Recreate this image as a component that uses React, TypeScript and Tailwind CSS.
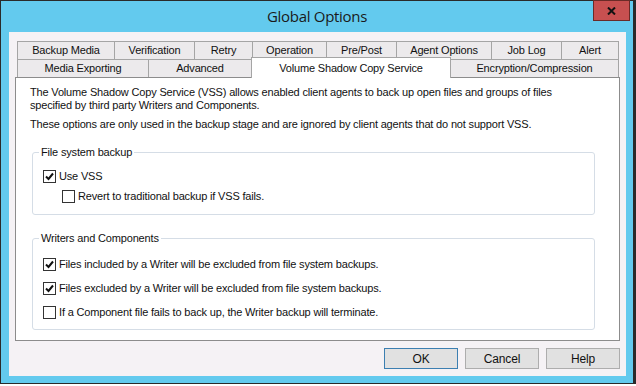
import React from "react";

type Tab = { label: string; w: string; selected?: boolean; last?: boolean };

const row1: Tab[] = [
  { label: "Backup Media", w: "w-[97px]" },
  { label: "Verification", w: "w-[80px]" },
  { label: "Retry", w: "w-[58px]" },
  { label: "Operation", w: "w-[74px]" },
  { label: "Pre/Post", w: "w-[70px]" },
  { label: "Agent Options", w: "w-[95px]" },
  { label: "Job Log", w: "w-[70px]" },
  { label: "Alert", w: "w-[58px]", last: true },
];

const row2: Tab[] = [
  { label: "Media Exporting", w: "w-[131px]" },
  { label: "Advanced", w: "w-[103px]" },
  { label: "Volume Shadow Copy Service", w: "w-[200px]", selected: true },
  { label: "Encryption/Compression", w: "w-[168px]", last: true },
];

function CheckBox({ checked }: { checked?: boolean }) {
  return (
    <span className="flex h-[13px] w-[13px] shrink-0 items-center justify-center border border-[#333333] bg-white">
      {checked && (
        <svg width="9" height="9" viewBox="0 0 9 9">
          <path d="M1 4.5 L3.5 7 L8 1.5" fill="none" stroke="#111" strokeWidth="2" />
        </svg>
      )}
    </span>
  );
}

function Option({ label, checked, indent }: { label: string; checked?: boolean; indent?: boolean }) {
  return (
    <div className={`flex h-[13px] items-center gap-[3px] ${indent ? "ml-[19px]" : ""}`}>
      <CheckBox checked={checked} />
      <span>{label}</span>
    </div>
  );
}

function GroupBox({ title, h, children }: { title: string; h: string; children: React.ReactNode }) {
  return (
    <div className={`relative ml-[16px] w-[563px] ${h} rounded-[3px] border border-[#d5dde6]`}>
      <span className="absolute -top-[8px] left-[6px] bg-white px-[2px] leading-[14px]">{title}</span>
      {children}
    </div>
  );
}

function Button({ label, primary }: { label: string; primary?: boolean }) {
  return (
    <button
      className={`h-[21px] w-[74px] border bg-[#e1e1e1] text-[12px] leading-none text-[#111] ${
        primary ? "border-[#3c7fb1]" : "border-[#adadad]"
      }`}
    >
      {label}
    </button>
  );
}

export default function App() {
  return (
    <div className="h-[386px] w-[636px] bg-white font-['Liberation_Sans',Arial,sans-serif] text-[11px] tracking-[-0.17px] text-[#111]">
      <div className="flex h-[384px] w-[636px] flex-col border-y border-l border-r-[3px] border-[#2a2a2a] bg-[#63caee]">
        <div className="relative flex h-[31px] shrink-0 items-center justify-center">
          <span className="font-['Open_Sans',sans-serif] text-[15px] tracking-[-0.3px] text-[#1a1a1a]">Global Options</span>
          <div className="absolute -top-px right-[3px] flex h-[21px] w-[37px] items-center justify-center border border-[#6b2a27] bg-[#c75050]">
            <svg width="9" height="8" viewBox="0 0 9 8">
              <path d="M1 0.5 L8 7.5 M8 0.5 L1 7.5" stroke="#111" strokeWidth="2" />
            </svg>
          </div>
        </div>

        <div className="ml-[8px] mr-[7px] flex h-[344px] flex-col bg-[#f5f2f5] pt-[9px]">
          <div className="ml-[8px] flex h-[18px]">
            {row1.map((t) => (
              <div
                key={t.label}
                className={`flex ${t.w} items-center justify-center border-l border-t border-[#a5a5a5] bg-[#eceaec] leading-none ${
                  t.last ? "border-r" : ""
                }`}
              >
                {t.label}
              </div>
            ))}
          </div>
          <div className="ml-[8px] flex h-[18px]">
            {row2.map((t) =>
              t.selected ? (
                <div
                  key={t.label}
                  className={`relative z-10 -mt-[2px] flex h-[21px] ${t.w} items-start justify-center border-x border-t border-[#a5a5a5] bg-white pt-[5px] leading-none`}
                >
                  {t.label}
                </div>
              ) : (
                <div
                  key={t.label}
                  className={`flex ${t.w} items-center justify-center border-t border-[#a5a5a5] bg-[#eceaec] leading-none ${
                    t.last ? "border-r" : "border-l"
                  }`}
                >
                  {t.label}
                </div>
              )
            )}
          </div>
          <div className="ml-[6px] h-[264px] w-[605px] border border-[#8c8c8c] bg-white">
            <p className="ml-[14px] mt-[8px] leading-[13px]">
              The Volume Shadow Copy Service (VSS) allows enabled client agents to back up open files and groups of files
              <br />
              specified by third party Writers and Components.
            </p>
            <p className="ml-[14px] mt-[6px] leading-[13px]">
              These options are only used in the backup stage and are ignored by client agents that do not support VSS.
            </p>

            <div className="mt-[21px]">
              <GroupBox title="File system backup" h="h-[63px]">
                <div className="flex flex-col gap-[7px] pl-[10px] pt-[17px]">
                  <Option label="Use VSS" checked />
                  <Option label="Revert to traditional backup if VSS fails." indent />
                </div>
              </GroupBox>
            </div>

            <div className="mt-[23px]">
              <GroupBox title="Writers and Components" h="h-[92px]">
                <div className="flex flex-col gap-[11px] pl-[10px] pt-[19px]">
                  <Option label="Files included by a Writer will be excluded from file system backups." checked />
                  <Option label="Files excluded by a Writer will be excluded from file system backups." checked />
                  <Option label="If a Component file fails to back up, the Writer backup will terminate." />
                </div>
              </GroupBox>
            </div>
          </div>
          <div className="mr-[6px] mt-[7px] flex justify-end gap-[7px]">
            <Button label="OK" primary />
            <Button label="Cancel" />
            <Button label="Help" />
          </div>
        </div>
      </div>
    </div>
  );
}
